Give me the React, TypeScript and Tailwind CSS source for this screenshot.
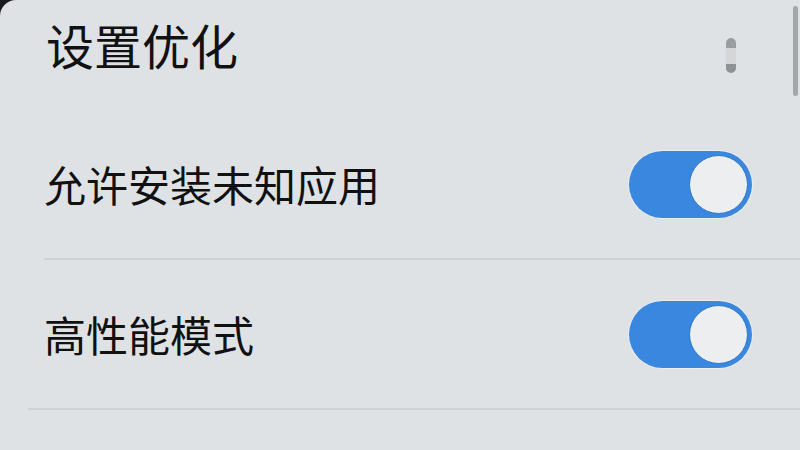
import React from 'react';

const font = { fontFamily: '"Noto Sans CJK SC", "Noto Sans", sans-serif' };

function Toggle() {
  return (
    <div className="flex h-[67px] w-[123px] items-center justify-end rounded-full bg-[#3a87df] p-[4px] shadow-[0_0_0_1px_#e9edf1]">
      <div className="h-[59px] w-[59px] rounded-full border-[1.5px] border-[#2f74c4] bg-[#eceef0]" />
    </div>
  );
}

function Row({ label, dividerInset }: { label: string; dividerInset: string }) {
  return (
    <div className="flex flex-col">
      <div className="flex h-[148px] items-center justify-between pl-[44px] pr-[48px]">
        <span className="text-[42px] leading-none text-[#111]">{label}</span>
        <Toggle />
      </div>
      <div className={`h-[2px] bg-[#cfd2d5] ${dividerInset}`} />
    </div>
  );
}

export default function App() {
  return (
    <div className="h-[450px] w-[800px] overflow-hidden bg-[#1a1a1a]" style={font}>
      <div className="relative h-[450px] rounded-tl-[16px] bg-[#dfe2e5]">
        <div className="flex h-[110px] items-center justify-between pl-[46px] pr-[64px]">
          <span className="pb-[22px] text-[48px] leading-none text-[#111]">设置优化</span>
          <div className="flex h-[35px] w-[10px] flex-col overflow-hidden rounded-full">
            <div className="h-[10px] bg-[#9a9da0]" />
            <div className="flex-1 bg-[#d4d6d8]" />
            <div className="h-[9px] bg-[#8f9295]" />
          </div>
        </div>
        <Row label="允许安装未知应用" dividerInset="ml-[44px]" />
        <Row label="高性能模式" dividerInset="ml-[28px]" />
        <div className="absolute right-[2px] top-[6px] h-[90px] w-[5px] rounded-full bg-[#a4a7aa]" />
      </div>
    </div>
  );
}
